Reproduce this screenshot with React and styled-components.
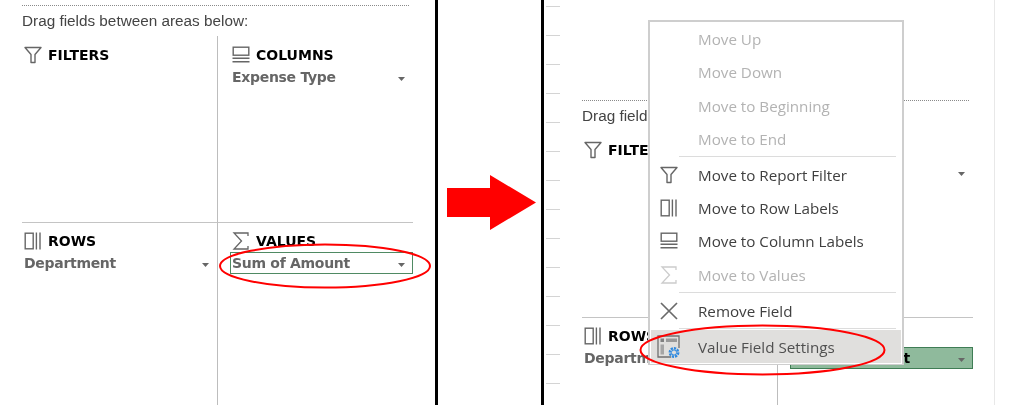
import React from 'react'
import styled, { createGlobalStyle } from 'styled-components'

const GlobalStyle = createGlobalStyle`
  html, body {
    margin: 0;
    padding: 0;
    background: #fff;
    overflow: hidden;
  }
`

const FilterIcon = ({ size = 18 }) => (
  <svg width={size} height={size} viewBox="0 0 18 18" fill="none" stroke="#666" strokeWidth="1.4">
    <path d="M1 1.5 H17 L11 8.5 V16.5 H7 V8.5 Z" strokeLinejoin="round" />
  </svg>
)

const ColumnsIcon = ({ size = 18 }) => (
  <svg width={size} height={size} viewBox="0 0 18 18" fill="none" stroke="#666" strokeWidth="1.4">
    <rect x="1.2" y="1.2" width="15.6" height="8" />
    <path d="M0.5 12.2 H17.5 M0.5 15.8 H17.5" />
  </svg>
)

const RowsIcon = ({ size = 18 }) => (
  <svg width={size} height={size} viewBox="0 0 18 18" fill="none" stroke="#666" strokeWidth="1.4">
    <rect x="1.2" y="1.2" width="8" height="15.6" />
    <path d="M12.4 0.5 V17.5 M16 0.5 V17.5" />
  </svg>
)

const SigmaIcon = ({ size = 18, color = '#666' }) => (
  <svg width={size} height={size} viewBox="0 0 18 18" fill="none" stroke={color} strokeWidth="1.3">
    <path d="M16 4 V1 H2 L9.5 9 L2 17 H16 V14" />
  </svg>
)

const CloseIcon = () => (
  <svg width="20" height="20" viewBox="0 0 20 20" fill="none" stroke="#6a6a6a" strokeWidth="1.7">
    <path d="M2 2 L18 18 M18 2 L2 18" />
  </svg>
)

const SettingsIcon = () => (
  <svg width="24" height="24" viewBox="0 0 24 24" fill="none">
    <path d="M14 22 H1 V1 H22 V13" stroke="#707070" strokeWidth="1.3" />
    <rect x="3.5" y="3.5" width="3.5" height="3.5" fill="#808080" />
    <rect x="9" y="3.5" width="11" height="3.5" fill="#999" />
    <rect x="3.5" y="9.5" width="3.5" height="10" fill="#a5a5a5" />
    <circle cx="17" cy="17.5" r="4.2" stroke="#2f8ae0" strokeWidth="2.4" strokeDasharray="2.2 1" />
    <circle cx="17" cy="17.5" r="2.6" stroke="#2f8ae0" strokeWidth="1" />
  </svg>
)

const Caret = () => (
  <CaretMark viewBox="0 0 7 4" width="7" height="4">
    <path d="M0 0 H7 L3.5 4 Z" fill="#666" />
  </CaretMark>
)

const Zone = ({ icon, title, field, active, selected }) => (
  <ZoneCell>
    <ZoneHeader>
      {icon}
      <ZoneTitle>{title}</ZoneTitle>
    </ZoneHeader>
    {field && (
      <Field $active={active} $selected={selected}>
        <FieldName $active={active}>{field}</FieldName>
        <Caret />
      </Field>
    )}
  </ZoneCell>
)

const PivotPanel = ({ active }) => (
  <Panel>
    <DottedRule />
    <Hint>Drag fields between areas below:</Hint>
    <Areas>
      <Zone icon={<FilterIcon />} title="FILTERS" />
      <Zone icon={<ColumnsIcon />} title="COLUMNS" field="Expense Type" />
      <Zone icon={<RowsIcon />} title="ROWS" field="Department" />
      <Zone
        icon={<SigmaIcon />}
        title="VALUES"
        field="Sum of Amount"
        active={active}
        selected={!active}
      />
    </Areas>
  </Panel>
)

const MenuEntry = ({ icon, label, disabled, highlighted }) => (
  <MenuItem $highlighted={highlighted}>
    <MenuIcon>{icon}</MenuIcon>
    <MenuLabel $disabled={disabled} $highlighted={highlighted}>{label}</MenuLabel>
  </MenuItem>
)

const App = () => {
  return (
    <Page>
      <GlobalStyle />
      <LeftPane>
        <PivotPanel />
        <RedEllipse $left={219} $top={243} width="212" height="46" viewBox="0 0 212 46">
          <ellipse cx="106" cy="23" rx="105" ry="21.5" />
        </RedEllipse>
      </LeftPane>

      <ArrowPane>
        <svg width="89" height="55" viewBox="0 0 89 55">
          <path d="M0 13 H43 V0 L89 27.5 L43 55 V42 H0 Z" fill="#ff0000" />
        </svg>
      </ArrowPane>

      <RightPane>
        <Ticks>
          {Array.from({ length: 14 }).map((_, i) => <Tick key={i} />)}
        </Ticks>
        <RightContent>
          <PivotPanel active />
        </RightContent>

        <Menu>
          <MenuEntry label="Move Up" disabled />
          <MenuEntry label="Move Down" disabled />
          <MenuEntry label="Move to Beginning" disabled />
          <MenuEntry label="Move to End" disabled />
          <MenuDivider />
          <MenuEntry icon={<FilterIcon />} label="Move to Report Filter" />
          <MenuEntry icon={<RowsIcon />} label="Move to Row Labels" />
          <MenuEntry icon={<ColumnsIcon />} label="Move to Column Labels" />
          <MenuEntry icon={<SigmaIcon color="#ccc" />} label="Move to Values" disabled />
          <MenuDivider />
          <MenuEntry icon={<CloseIcon />} label="Remove Field" />
          <MenuDivider />
          <MenuEntry icon={<SettingsIcon />} label="Value Field Settings" highlighted />
        </Menu>

        <RedEllipse $left={95} $top={324} width="247" height="52" viewBox="0 0 247 52">
          <ellipse cx="123.5" cy="26" rx="122" ry="24.5" />
        </RedEllipse>
      </RightPane>
    </Page>
  )
}

const Page = styled.div`
  width: 1024px;
  height: 405px;
  display: flex;
  overflow: hidden;
  background: #fff;
  filter: blur(0.35px);
`

const LeftPane = styled.div`
  position: relative;
  width: 413px;
  height: 400px;
  padding: 5px 0 0 22px;
  border-right: 3px solid #000;
  flex: none;
`

const ArrowPane = styled.div`
  width: 103px;
  height: 100%;
  flex: none;
  display: flex;
  padding: 175px 0 0 9px;
  box-sizing: border-box;
  align-items: flex-start;
`

const RightPane = styled.div`
  position: relative;
  flex: 1;
  height: 100%;
  display: flex;
  border-left: 3px solid #000;
`

const Ticks = styled.div`
  width: 14px;
  margin-left: 2px;
  padding-top: 6px;
  display: flex;
  flex-direction: column;
  gap: 28px;
  flex: none;
`

const Tick = styled.div`
  height: 1px;
  background: #d4d4d4;
`

const RightContent = styled.div`
  width: 413px;
  margin-left: 22px;
  padding-top: 100px;
  border-right: 1px solid #e8e8e8;
  box-sizing: border-box;
  flex: none;
`

const Panel = styled.div`
  width: 391px;
  font-family: 'DejaVu Sans', Verdana, sans-serif;
`

const DottedRule = styled.div`
  height: 0;
  width: 387px;
  border-top: 1px dotted #8a8a8a;
`

const Hint = styled.div`
  height: 30px;
  font-family: 'Liberation Sans', Arial, sans-serif;
  font-size: 15.3px;
  line-height: 30px;
  color: #444;
`

const Areas = styled.div`
  display: grid;
  grid-template-columns: 196px 195px;
  grid-template-rows: 187px 183px;
`

const ZoneCell = styled.div`
  padding: 10px 0 0 0;
  box-sizing: border-box;
  &:nth-child(odd) {
    border-right: 1px solid #bdbdbd;
  }
  &:nth-child(even) {
    padding-left: 12px;
  }
  &:nth-child(-n + 2) {
    border-bottom: 1px solid #c4c4c4;
  }
  &:nth-child(n + 3) {
    padding-top: 9px;
  }
`

const ZoneHeader = styled.div`
  height: 18px;
  margin-bottom: 2px;
  padding-left: 2px;
  display: flex;
  align-items: center;
  gap: 6px;
`

const ZoneTitle = styled.span`
  font-size: 14px;
  font-weight: 700;
  color: #000;
`

const Field = styled.div`
  height: 22px;
  padding: 0 7px 0 1px;
  box-sizing: border-box;
  display: flex;
  align-items: center;
  justify-content: space-between;
  background: ${props => props.$active ? '#8fba9c' : 'transparent'};
  border: 1px solid ${props => props.$active ? '#3f7d55' : props.$selected ? '#4f8a63' : 'transparent'};
`

const FieldName = styled.span`
  font-size: 14px;
  font-weight: 700;
  letter-spacing: -0.3px;
  color: ${props => props.$active ? '#000' : '#666'};
`

const CaretMark = styled.svg`
  flex: none;
  margin-top: 3px;
`

const Menu = styled.div`
  position: absolute;
  left: 104px;
  top: 20px;
  width: 256px;
  height: 345px;
  padding: 0.6px 1px 0 1px;
  box-sizing: border-box;
  background: #fff;
  border: 2px solid #cecece;
  border-bottom-width: 1px;
  font-family: 'Open Sans', sans-serif;
`

const MenuItem = styled.div`
  height: 33.2px;
  display: flex;
  align-items: center;
  gap: 12px;
  background: ${props => props.$highlighted ? '#e0dfdd' : 'transparent'};
`

const MenuIcon = styled.span`
  width: 35px;
  flex: none;
  display: flex;
  justify-content: center;
`

const MenuLabel = styled.span`
  font-size: 15.2px;
  line-height: 20px;
  color: ${props => props.$disabled ? '#b3b3b3' : props.$highlighted ? '#505050' : '#404040'};
`

const MenuDivider = styled.div`
  height: 1px;
  margin: 1px 5px 1px 28px;
  background: #dcdcdc;
`

const RedEllipse = styled.svg`
  position: absolute;
  left: ${props => props.$left}px;
  top: ${props => props.$top}px;
  fill: none;
  stroke: #f00;
  stroke-width: 2;
  overflow: visible;
`

export default App
